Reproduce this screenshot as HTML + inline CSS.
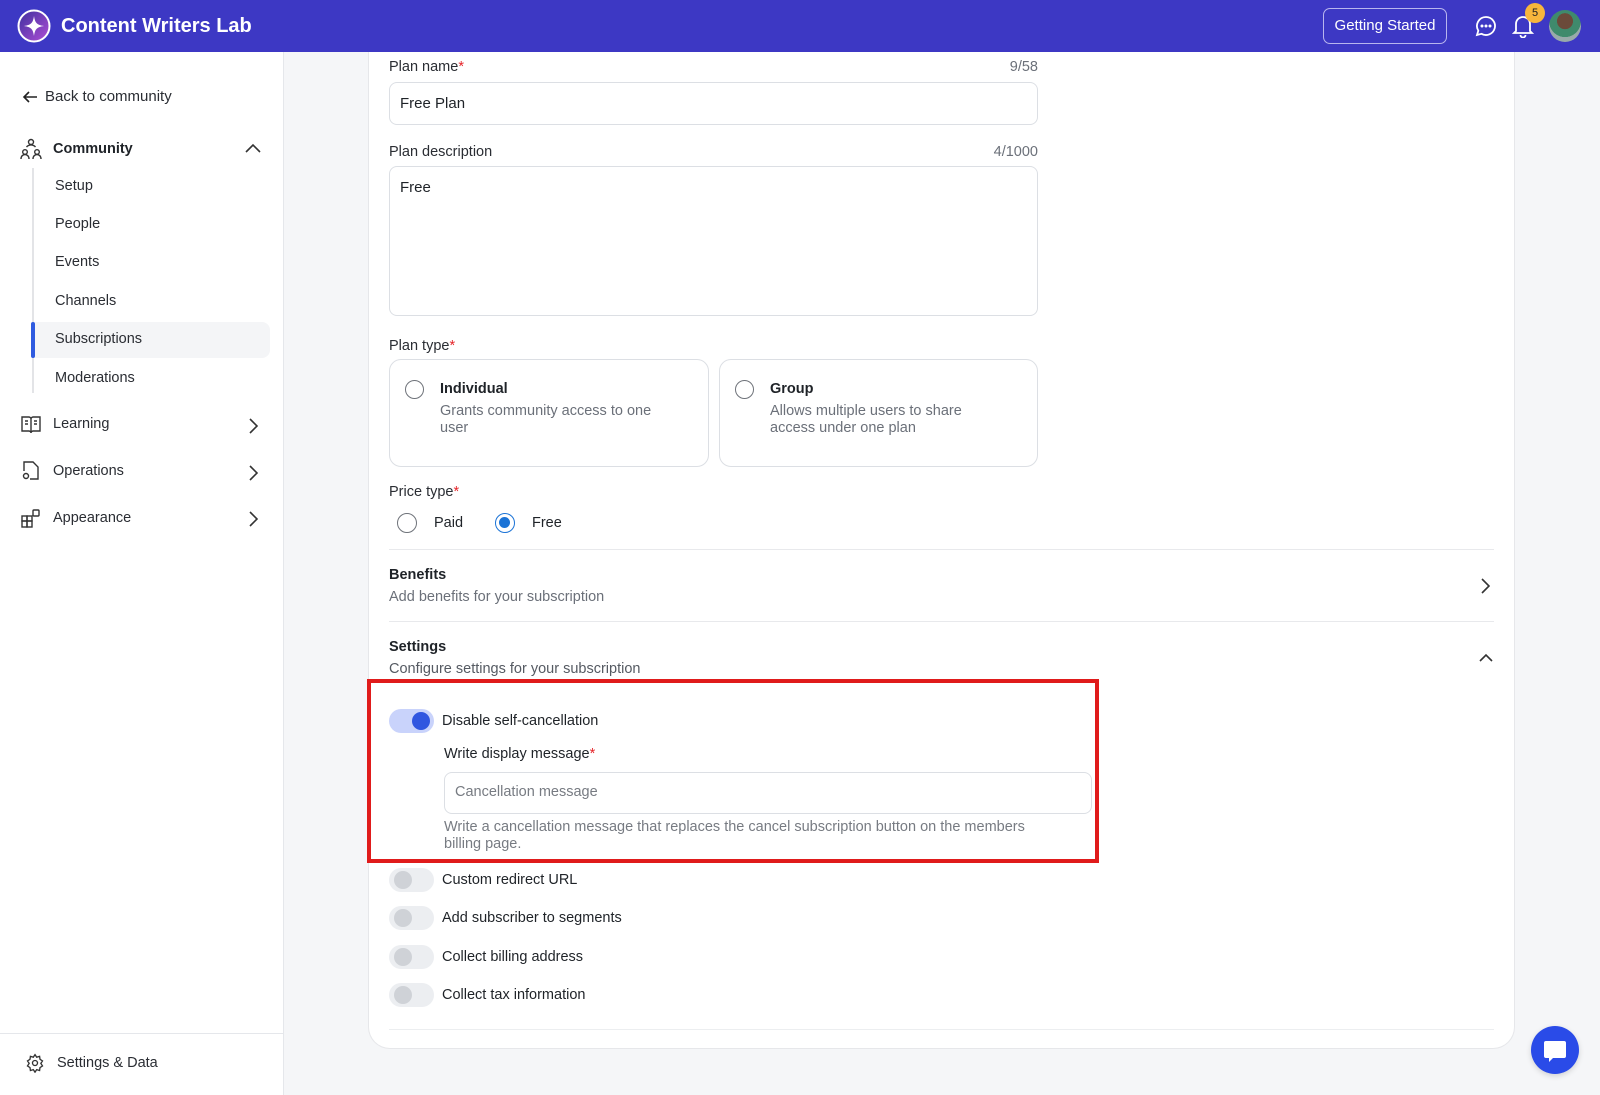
<!DOCTYPE html>
<html><head><meta charset="utf-8"><style>
*{box-sizing:border-box;margin:0;padding:0}
body{width:1600px;height:1095px;overflow:hidden;background:#f5f6f8;font-family:"Liberation Sans",sans-serif;color:#1f2328;font-size:14px;position:relative}
.a{position:absolute}
.hdr{left:0;top:0;width:1600px;height:52px;background:#3d38c4;z-index:5}
.side{left:0;top:52px;width:284px;height:1043px;background:#fff;border-right:1px solid #e5e7eb}
.card{left:368px;top:52px;width:1147px;height:997px;background:#fff;border:1px solid #e6e7ea;border-radius:0 0 22px 22px;border-top:none}
.lbl{font-size:14.5px;color:#2a2d33}
.req{color:#e5252a}
.inp{border:1px solid #dcdfe4;border-radius:8px;background:#fff}
.grey{color:#6b7079}
.tog{width:45px;height:24px;border-radius:12px;background:#eceef1}
.tog i{position:absolute;left:5px;top:3px;width:18px;height:18px;border-radius:50%;background:#cfd2d7}
.tog.on{background:#c9d3fb}
.tog.on i{left:23px;background:#3056e0}
.radio{width:20px;height:20px;border-radius:50%;border:1.5px solid #6f737a;background:#fff}
.si{font-size:14.5px;color:#2a2d33}
</style></head><body>
<div class="a hdr">
  <svg class="a" style="left:17px;top:9px" width="34" height="34" viewBox="0 0 34 34"><defs><linearGradient id="g" x1="0" y1="0" x2="1" y2="1"><stop offset="0" stop-color="#3d2f9e"/><stop offset="1" stop-color="#b04fd6"/></linearGradient></defs><circle cx="17" cy="17" r="15.5" fill="url(#g)" stroke="#fff" stroke-width="2"/><path d="M17 7 C18 14 20 16 27 17 C20 18 18 20 17 27 C16 20 14 18 7 17 C14 16 16 14 17 7Z" fill="#fff"/></svg>
  <div class="a" style="left:61px;top:15px;color:#fff;font-weight:bold;font-size:20px">Content Writers Lab</div>
  <div class="a" style="left:1323px;top:8px;width:124px;height:36px;border:1.5px solid #b9b6ee;border-radius:7px;color:#fff;font-size:15px;text-align:center;line-height:34px">Getting Started</div>
  <svg class="a" style="left:1475px;top:15px" width="22" height="22" viewBox="0 0 22 22" fill="none" stroke="#fff" stroke-width="1.8"><path d="M11 2a9 9 0 1 1-4.5 16.8L2 20l1.3-4.3A9 9 0 0 1 11 2z"/><circle cx="7" cy="11" r=".6" fill="#fff"/><circle cx="11" cy="11" r=".6" fill="#fff"/><circle cx="15" cy="11" r=".6" fill="#fff"/></svg>
  <svg class="a" style="left:1512px;top:14px" width="22" height="24" viewBox="0 0 22 24" fill="none" stroke="#fff" stroke-width="1.8"><path d="M4 17V10a7 7 0 0 1 14 0v7l2 2H2z"/><path d="M8.5 21a2.5 2.5 0 0 0 5 0"/></svg>
  <div class="a" style="left:1525px;top:3px;width:20px;height:20px;border-radius:50%;background:#f7b63c;color:#222;font-size:11px;text-align:center;line-height:20px">5</div>
  <div class="a" style="left:1549px;top:10px;width:32px;height:32px;border-radius:50%;background:radial-gradient(circle at 50% 35%,#6b4a3a 0 30%,#3f8a6c 31% 60%,#9aa 61%)"></div>
</div>
<div class="a side">
  <svg class="a" style="left:22px;top:37px" width="16" height="16" viewBox="0 0 16 16" fill="none" stroke="#222" stroke-width="1.6"><path d="M15 8H2M7 3L2 8l5 5"/></svg>
  <div class="a si" style="left:45px;top:36px;font-size:15px">Back to community</div>
  <svg class="a" style="left:20px;top:86px" width="22" height="22" viewBox="0 0 22 22" fill="none" stroke="#333" stroke-width="1.4"><circle cx="11" cy="4" r="2.5"/><circle cx="5" cy="14" r="2.3"/><circle cx="17" cy="14" r="2.3"/><path d="M1 21c0-3 2-4.5 4-4.5s4 1.5 4 4.5M13 21c0-3 2-4.5 4-4.5s4 1.5 4 4.5M6.5 9a6 6 0 0 1 9 0"/></svg>
  <div class="a" style="left:53px;top:89px;font-weight:bold;font-size:14.5px">Community</div>
  <svg class="a" style="left:245px;top:91px" width="16" height="10" viewBox="0 0 16 10" fill="none" stroke="#333" stroke-width="1.6"><path d="M1 9l7-7 7 7"/></svg>
  <div class="a" style="left:32px;top:116px;width:2px;height:225px;background:#e3e4e7"></div>
  <div class="a" style="left:32px;top:270px;width:238px;height:36px;background:#f4f5f7;border-radius:0 8px 8px 0"></div>
  <div class="a" style="left:31px;top:270px;width:4px;height:36px;background:#2f5be0;border-radius:2px"></div>
  <div class="a si" style="left:55px;top:126px">Setup</div>
  <div class="a si" style="left:55px;top:164px">People</div>
  <div class="a si" style="left:55px;top:202px">Events</div>
  <div class="a si" style="left:55px;top:241px">Channels</div>
  <div class="a si" style="left:55px;top:279px">Subscriptions</div>
  <div class="a si" style="left:55px;top:318px">Moderations</div>
  <svg class="a" style="left:21px;top:364px" width="20" height="18" viewBox="0 0 20 18" fill="none" stroke="#333" stroke-width="1.4"><path d="M1 1h7c1 0 2 1 2 2v14c0-1-1-2-2-2H1zM19 1h-7c-1 0-2 1-2 2v14c0-1 1-2 2-2h7z"/><path d="M4 5h3M4 8h3M13 5h3M13 8h3"/></svg>
  <div class="a si" style="left:53px;top:364px">Learning</div>
  <svg class="a" style="left:21px;top:409px" width="18" height="20" viewBox="0 0 18 20" fill="none" stroke="#333" stroke-width="1.4"><path d="M6 1h6l5 5v12H9M3 10V1h3"/><circle cx="5" cy="15" r="2.5"/></svg>
  <div class="a si" style="left:53px;top:411px">Operations</div>
  <svg class="a" style="left:21px;top:457px" width="19" height="19" viewBox="0 0 19 19" fill="none" stroke="#333" stroke-width="1.4"><rect x="1" y="7" width="5" height="5"/><rect x="6" y="7" width="5" height="5"/><rect x="1" y="12" width="5" height="6"/><rect x="6" y="12" width="5" height="6"/><rect x="12" y="1" width="6" height="6" rx="1"/></svg>
  <div class="a si" style="left:53px;top:458px">Appearance</div>
  <svg class="a" style="left:248px;top:366px" width="10" height="16" viewBox="0 0 10 16" fill="none" stroke="#333" stroke-width="1.6"><path d="M2 1l7 7-7 7"/></svg>
  <svg class="a" style="left:248px;top:413px" width="10" height="16" viewBox="0 0 10 16" fill="none" stroke="#333" stroke-width="1.6"><path d="M2 1l7 7-7 7"/></svg>
  <svg class="a" style="left:248px;top:459px" width="10" height="16" viewBox="0 0 10 16" fill="none" stroke="#333" stroke-width="1.6"><path d="M2 1l7 7-7 7"/></svg>
  <div class="a" style="left:0;top:981px;width:284px;height:1px;background:#e5e7eb"></div>
  <svg class="a" style="left:25px;top:1001px" width="20" height="20" viewBox="0 0 24 24" fill="none" stroke="#333" stroke-width="1.6"><circle cx="12" cy="12" r="3"/><path d="M12 2l2 3 3.5-1 .5 3.5 3 2-2 3 2 3-3 2-.5 3.5-3.5-1-2 3-2-3-3.5 1-.5-3.5-3-2 2-3-2-3 3-2 .5-3.5 3.5 1z"/></svg>
  <div class="a si" style="left:57px;top:1003px">Settings &amp; Data</div>
</div>
<div class="a card"></div>
<div class="a lbl" style="left:389px;top:59px">Plan name<span class="req">*</span></div>
<div class="a grey" style="left:990px;top:59px;width:48px;text-align:right;font-size:14.5px">9/58</div>
<div class="a inp" style="left:389px;top:82px;width:649px;height:43px"></div>
<div class="a" style="left:400px;top:95px;font-size:15px">Free Plan</div>
<div class="a lbl" style="left:389px;top:144px">Plan description</div>
<div class="a grey" style="left:970px;top:144px;width:68px;text-align:right;font-size:14.5px">4/1000</div>
<div class="a inp" style="left:389px;top:166px;width:649px;height:150px"></div>
<div class="a" style="left:400px;top:179px;font-size:15px">Free</div>
<div class="a lbl" style="left:389px;top:338px">Plan type<span class="req">*</span></div>
<div class="a inp" style="left:389px;top:359px;width:320px;height:108px;border-radius:12px"></div>
<div class="a inp" style="left:719px;top:359px;width:319px;height:108px;border-radius:12px"></div>
<div class="a radio" style="left:405px;top:380px;width:19px;height:19px"></div>
<div class="a" style="left:440px;top:381px;font-weight:bold;font-size:14.5px">Individual</div>
<div class="a grey" style="left:440px;top:403px;line-height:17px;width:228px;font-size:14.5px">Grants community access to one user</div>
<div class="a radio" style="left:735px;top:380px;width:19px;height:19px"></div>
<div class="a" style="left:770px;top:381px;font-weight:bold;font-size:14.5px">Group</div>
<div class="a grey" style="left:770px;top:403px;line-height:17px;width:230px;font-size:14.5px">Allows multiple users to share access under one plan</div>
<div class="a lbl" style="left:389px;top:484px">Price type<span class="req">*</span></div>
<div class="a radio" style="left:397px;top:513px"></div>
<div class="a" style="left:434px;top:515px;font-size:14.5px">Paid</div>
<div class="a radio" style="left:495px;top:513px;border-color:#1b73d6"><div class="a" style="left:3px;top:3px;width:11px;height:11px;border-radius:50%;background:#1b73d6"></div></div>
<div class="a" style="left:532px;top:515px;font-size:14.5px">Free</div>
<div class="a" style="left:389px;top:549px;width:1105px;height:1px;background:#e8e9ec"></div>
<div class="a" style="left:389px;top:567px;font-weight:bold;font-size:14.5px">Benefits</div>
<div class="a grey" style="left:389px;top:589px;font-size:14.5px">Add benefits for your subscription</div>
<svg class="a" style="left:1480px;top:578px" width="10" height="16" viewBox="0 0 10 16" fill="none" stroke="#333" stroke-width="1.6"><path d="M2 1l7 7-7 7"/></svg>
<div class="a" style="left:389px;top:621px;width:1105px;height:1px;background:#e8e9ec"></div>
<div class="a" style="left:389px;top:639px;font-weight:bold;font-size:14.5px">Settings</div>
<div class="a grey" style="left:389px;top:661px;font-size:14.5px;color:#555a62">Configure settings for your subscription</div>
<svg class="a" style="left:1479px;top:653px" width="14" height="9" viewBox="0 0 14 9" fill="none" stroke="#333" stroke-width="1.6"><path d="M1 8l6-6 6 6"/></svg>
<div class="a" style="left:367px;top:679px;width:732px;height:184px;border:4px solid #e01b1b"></div>
<div class="a tog on" style="left:389px;top:709px"><i></i></div>
<div class="a" style="left:442px;top:713px;font-size:14.5px">Disable self-cancellation</div>
<div class="a" style="left:444px;top:746px;font-size:14.5px">Write display message<span class="req">*</span></div>
<div class="a inp" style="left:444px;top:772px;width:648px;height:42px"></div>
<div class="a grey" style="left:455px;top:784px;font-size:14.5px;color:#777b82">Cancellation message</div>
<div class="a grey" style="left:444px;top:819px;width:610px;line-height:17px;font-size:14.5px;color:#777b82">Write a cancellation message that replaces the cancel subscription button on the members billing page.</div>
<div class="a tog" style="left:389px;top:868px"><i></i></div>
<div class="a" style="left:442px;top:872px;font-size:14.5px">Custom redirect URL</div>
<div class="a tog" style="left:389px;top:906px"><i></i></div>
<div class="a" style="left:442px;top:910px;font-size:14.5px">Add subscriber to segments</div>
<div class="a tog" style="left:389px;top:945px"><i></i></div>
<div class="a" style="left:442px;top:949px;font-size:14.5px">Collect billing address</div>
<div class="a tog" style="left:389px;top:983px"><i></i></div>
<div class="a" style="left:442px;top:987px;font-size:14.5px">Collect tax information</div>
<div class="a" style="left:389px;top:1029px;width:1105px;height:1px;background:#eceef0"></div>
<div class="a" style="left:1531px;top:1026px;width:48px;height:48px;border-radius:50%;background:#2a4be8;box-shadow:0 2px 6px rgba(0,0,0,.15)"></div>
<svg class="a" style="left:1543px;top:1040px" width="24" height="24" viewBox="0 0 24 24"><path d="M3 1h18a2 2 0 0 1 2 2v13a2 2 0 0 1-2 2H10l-4 4v-4H3a2 2 0 0 1-2-2V3a2 2 0 0 1 2-2z" fill="#fff"/></svg>
</body></html>
